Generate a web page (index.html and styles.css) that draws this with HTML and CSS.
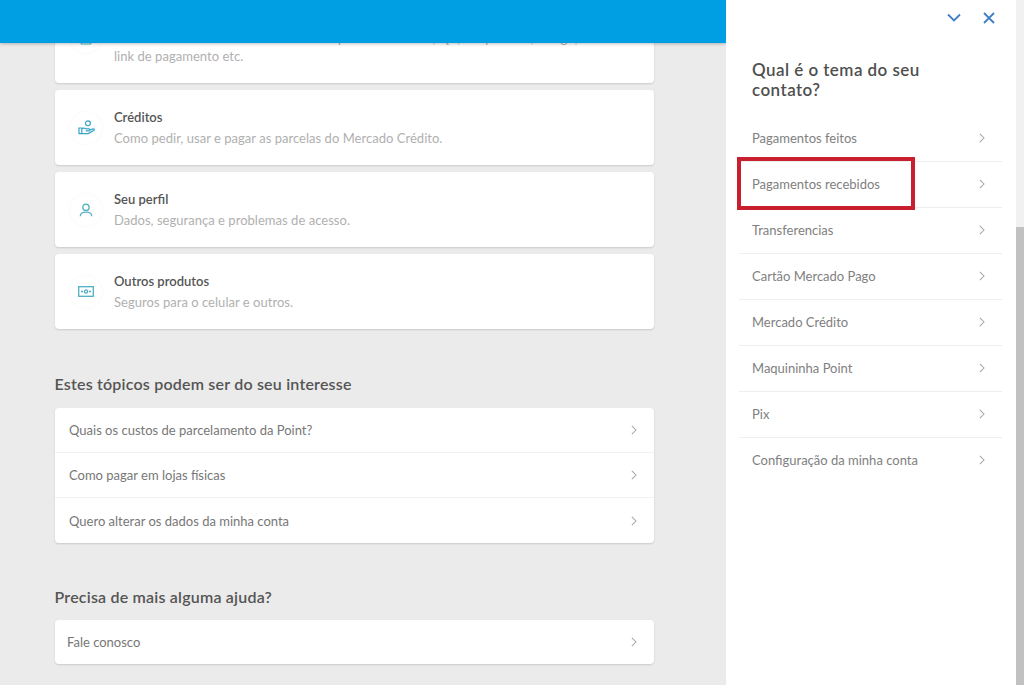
FILE: index.html
```html
<!DOCTYPE html>
<html lang="pt-BR">
<head>
<meta charset="utf-8">
<title>Ajuda</title>
<link rel="stylesheet" href="styles.css">
</head>
<body>
<div class="page">
  <main class="main">
    <div class="topbar"></div>
    <div class="content">
      <div class="cards">
        <div class="card card-tall">
          <span class="icon-slot">
            <svg width="14" height="16" viewBox="0 0 14 16" fill="none" stroke="#5cb3c4" stroke-width="1.2"><rect x="2" y="1" width="10" height="14" rx="1"/></svg>
          </span>
          <div class="card-text">
            <p class="card-title">Vendas</p>
            <p class="card-desc">Saiba como cobrar com as ferramentas para vender: link, QR, maquininha, código, um<br>link de pagamento etc.</p>
          </div>
        </div>
        <div class="card">
          <span class="icon-slot">
            <svg width="17" height="16" viewBox="0 0 18 17" fill="none" stroke="#3aa5c9" stroke-width="1.3"><circle cx="10.5" cy="3.500" r="2.600"/><path d="M1 8.500h3v6H1zM4 9.500c2-1.500 3-1 5 0h3c1 0 1 2 0 2H8M12 11l4-1.500c1.200-.4 1.700 1 .7 1.600L11 14.500H4"/></svg>
          </span>
          <div class="card-text">
            <p class="card-title">Créditos</p>
            <p class="card-desc">Como pedir, usar e pagar as parcelas do Mercado Crédito.</p>
          </div>
        </div>
        <div class="card">
          <span class="icon-slot">
            <svg width="14" height="14" viewBox="0 0 16 16" fill="none" stroke="#5cb3c4" stroke-width="1.500"><circle cx="8" cy="5" r="3.600"/><path d="M1.500 15c0-6 13-6 13 0"/></svg>
          </span>
          <div class="card-text">
            <p class="card-title">Seu perfil</p>
            <p class="card-desc">Dados, segurança e problemas de acesso.</p>
          </div>
        </div>
        <div class="card">
          <span class="icon-slot">
            <svg width="16" height="11" viewBox="0 0 16 11" fill="none" stroke="#4fb0c2" stroke-width="1.300"><rect x=".7" y=".7" width="14.600" height="9.600"/><circle cx="8" cy="5.500" r="1.600"/><path d="M3 5.500h2M11 5.500h2"/></svg>
          </span>
          <div class="card-text">
            <p class="card-title">Outros produtos</p>
            <p class="card-desc">Seguros para o celular e outros.</p>
          </div>
        </div>
      </div>

      <section class="section section-topics">
        <h2 class="section-title">Estes tópicos podem ser do seu interesse</h2>
        <div class="list">
          <a class="list-row"><span>Quais os custos de parcelamento da Point?</span><svg class="chev" width="6" height="10" viewBox="0 0 7 11"><path d="M1 .8 5.800 5.500 1 10.200"/></svg></a>
          <a class="list-row"><span>Como pagar em lojas físicas</span><svg class="chev" width="6" height="10" viewBox="0 0 7 11"><path d="M1 .8 5.800 5.500 1 10.200"/></svg></a>
          <a class="list-row"><span>Quero alterar os dados da minha conta</span><svg class="chev" width="6" height="10" viewBox="0 0 7 11"><path d="M1 .8 5.800 5.500 1 10.200"/></svg></a>
        </div>
      </section>

      <section class="section section-help">
        <h2 class="section-title">Precisa de mais alguma ajuda?</h2>
        <div class="list list-single">
          <a class="list-row list-row-tight"><span>Fale conosco</span><svg class="chev" width="6" height="10" viewBox="0 0 7 11"><path d="M1 .8 5.800 5.500 1 10.200"/></svg></a>
        </div>
      </section>
    </div>
  </main>

  <aside class="panel">
    <div class="panel-tools">
      <svg class="tool" width="14" height="9" viewBox="0 0 14 9"><path d="M1 1.500 7 7.500 13 1.500"/></svg>
      <svg class="tool" width="12" height="12" viewBox="0 0 12 12"><path d="M1 1 11 11M11 1 1 11"/></svg>
    </div>
    <h1 class="panel-title">Qual é o tema do seu contato?</h1>
    <nav class="topics">
      <a class="topic"><span>Pagamentos feitos</span><svg class="chev" width="6" height="10" viewBox="0 0 7 11"><path d="M1 .8 5.800 5.500 1 10.200"/></svg></a>
      <a class="topic"><span>Pagamentos recebidos</span><svg class="chev" width="6" height="10" viewBox="0 0 7 11"><path d="M1 .8 5.800 5.500 1 10.200"/></svg></a>
      <a class="topic"><span>Transferencias</span><svg class="chev" width="6" height="10" viewBox="0 0 7 11"><path d="M1 .8 5.800 5.500 1 10.200"/></svg></a>
      <a class="topic"><span>Cartão Mercado Pago</span><svg class="chev" width="6" height="10" viewBox="0 0 7 11"><path d="M1 .8 5.800 5.500 1 10.200"/></svg></a>
      <a class="topic"><span>Mercado Crédito</span><svg class="chev" width="6" height="10" viewBox="0 0 7 11"><path d="M1 .8 5.800 5.500 1 10.200"/></svg></a>
      <a class="topic"><span>Maquininha Point</span><svg class="chev" width="6" height="10" viewBox="0 0 7 11"><path d="M1 .8 5.800 5.500 1 10.200"/></svg></a>
      <a class="topic"><span>Pix</span><svg class="chev" width="6" height="10" viewBox="0 0 7 11"><path d="M1 .8 5.800 5.500 1 10.200"/></svg></a>
      <a class="topic"><span>Configuração da minha conta</span><svg class="chev" width="6" height="10" viewBox="0 0 7 11"><path d="M1 .8 5.800 5.500 1 10.200"/></svg></a>
    </nav>
    <div class="highlight"></div>
  </aside>

  <div class="scrollbar"><div class="scroll-thumb"></div></div>
</div>
</body>
</html>
```

FILE: styles.css
```css
* { box-sizing: border-box; }
html, body { margin: 0; height: 100%; overflow: hidden; }
body { font-family: "Lato", "Open Sans", sans-serif; background: #ebebeb; color: #4a4a4a; }
p, h1, h2 { margin: 0; }

.page { display: flex; height: 685px; width: 1024px; }

.main { position: relative; width: 726px; flex: none; overflow: hidden; }
.topbar { position: absolute; top: 0; left: 0; right: 0; height: 43px; background: #009ee3; box-shadow: 0 1px 3px rgba(0,0,0,.25); z-index: 2; }
.content { margin-top: -10px; padding: 0 72px 0 54.500px; }

.cards { display: flex; flex-direction: column; gap: 7px; }
.card { display: flex; align-items: center; height: 75px; background: #fff; border-radius: 4px; box-shadow: 0 1px 2px rgba(0,0,0,.14); padding: 0 16px 0 15.500px; }
.card-tall { height: 93px; }
.icon-slot { width: 32px; height: 32px; flex: none; display: flex; align-items: center; justify-content: center; border-radius: 50%; box-shadow: 0 0 3px rgba(0,0,0,.05); margin-right: 12px; }
.card-text { min-width: 0; }
.card-title { font-size: 13px; font-weight: 600; line-height: 18px; color: #555; }
.card-desc { font-size: 13px; line-height: 18px; letter-spacing: .03px; color: #b0b0b0; margin-top: 2.500px; }

.section-title { font-size: 16px; font-weight: 600; line-height: 20px; letter-spacing: .2px; color: #555; }
.section-topics { margin-top: 45px; }
.section-help { margin-top: 44px; }
.list { margin-top: 14px; background: #fff; border-radius: 4px; box-shadow: 0 1px 2px rgba(0,0,0,.14); }
.list-single { margin-top: 13px; }
.list-row { display: flex; align-items: center; justify-content: space-between; height: 45px; padding: 0 17px 0 14.500px; font-size: 13px; color: #777; border-bottom: 1px solid #f1f1f1; }
.list-row:last-child { border-bottom: 0; }
.list-row-tight { height: 44px; padding-left: 12.500px; }

.chev { fill: none; stroke: #a5a5a5; stroke-width: 1.200; flex: none; }

.panel { position: relative; width: 290px; flex: none; background: #fff; padding: 0 14px 0 13px; }
.panel-tools { display: flex; justify-content: flex-end; align-items: center; gap: 22px; height: 35px; padding-right: 7px; }
.tool { fill: none; stroke: #3f7fc4; stroke-width: 1.800; }
.panel-title { font-size: 17px; font-weight: 600; line-height: 20px; letter-spacing: .45px; color: #4f4f4f; margin: 25px 0 0 13px; width: 200px; }
.topics { margin-top: 16px; }
.topic { display: flex; align-items: center; justify-content: space-between; height: 46px; padding: 0 17px 2px 13px; font-size: 13px; color: #808080; border-bottom: 1px solid #eee; }
.topic:last-child { border-bottom: 0; }
.highlight { position: absolute; left: 11px; top: 157px; width: 178px; height: 53px; border: 4px solid #c8202e; }

.scrollbar { width: 8px; flex: none; background: #f1f1f1; position: relative; }
.scroll-thumb { position: absolute; top: 227px; bottom: 0; left: 0; right: 0; background: #c1c1c1; }
```
